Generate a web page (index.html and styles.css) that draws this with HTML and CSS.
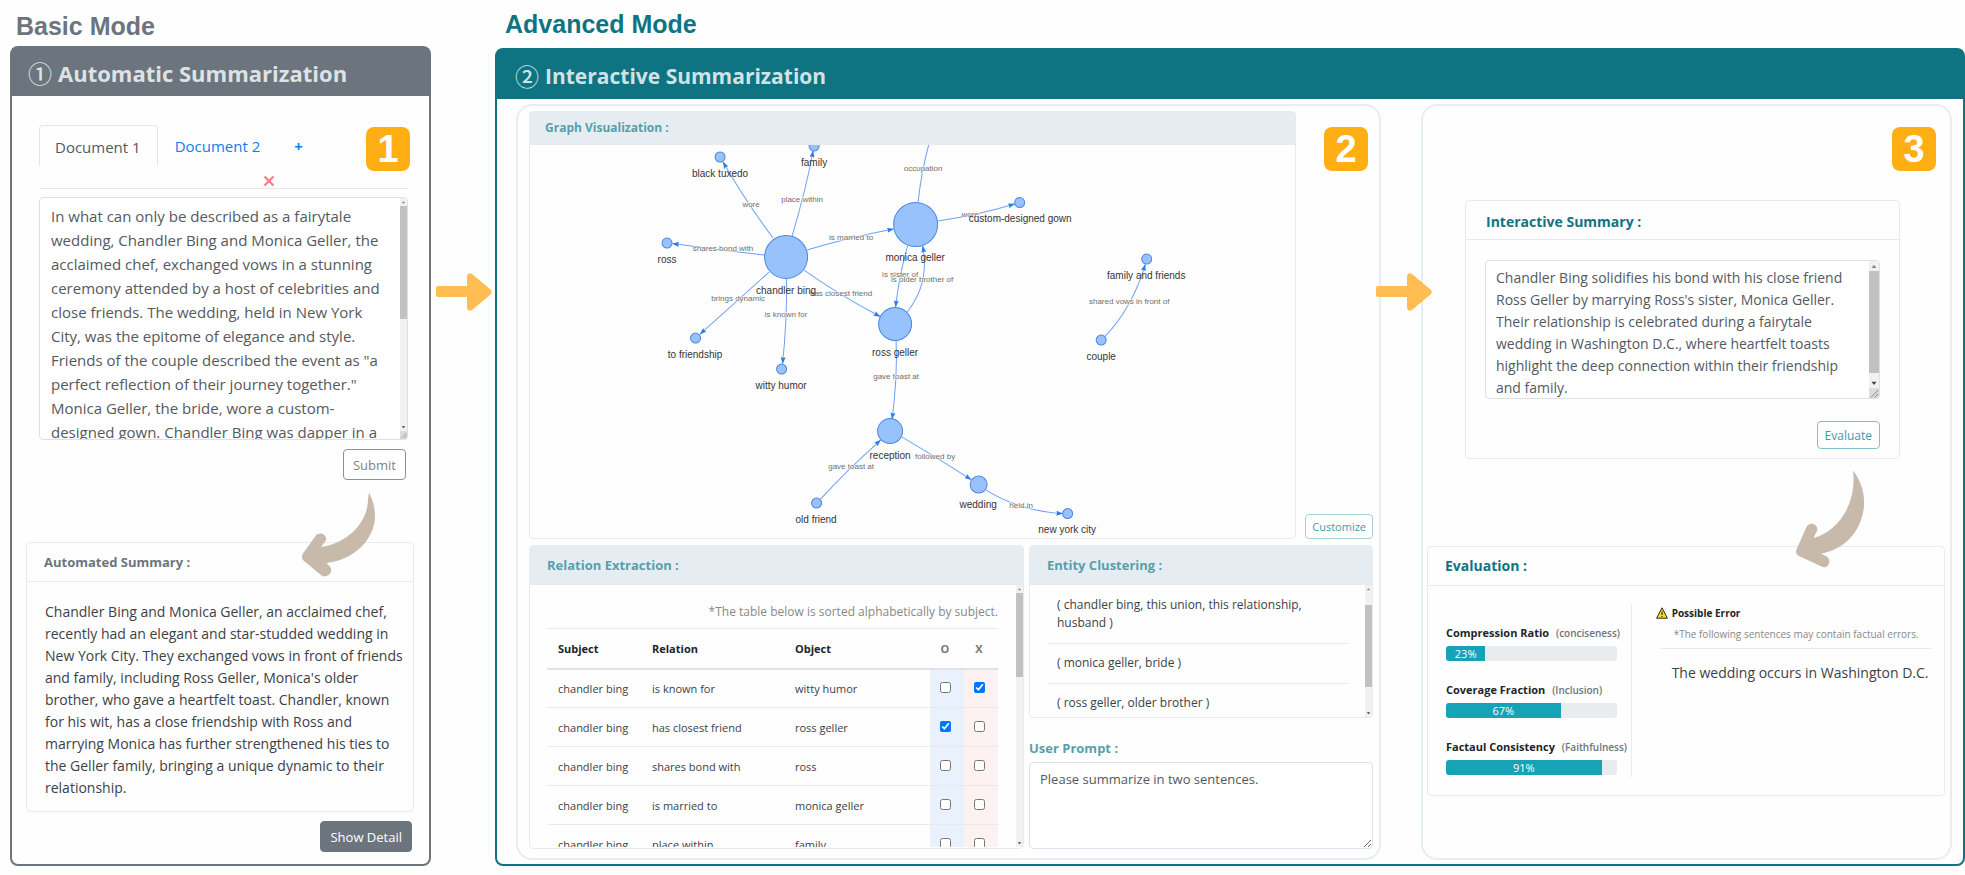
FILE: index.html
```html
<!DOCTYPE html>
<html lang="en">
<head>
<meta charset="utf-8">
<title>Summarization</title>
<link rel="stylesheet" href="styles.css">
</head>
<body>
<svg class="defs" width="0" height="0" aria-hidden="true">
  <symbol id="sb-up" viewBox="0 0 8 8"><path d="M2 5.500L4 3L6 5.500Z" fill="#8a8a8a"/></symbol>
  <symbol id="sb-down" viewBox="0 0 8 8"><path d="M2 3L4 5.500L6 3Z" fill="#444"/></symbol>
  <symbol id="sb-grip" viewBox="0 0 8 8"><path d="M1.500 7.500L7.500 1.500M4.500 7.500L7.500 4.500" stroke="#888" stroke-width=".8"/></symbol>
</svg>
<main class="page">
  <section class="mode mode-basic">
    <h1 class="mode-title">Basic Mode</h1>
    <div class="shell">
      <h2 class="shell-head"><span class="num">①</span> Automatic Summarization</h2>
      <div class="basic-body">
        <span class="badge">1</span>
        <div class="doc-area">
          <nav class="tabs">
            <a class="tab active" href="#doc1">Document 1</a>
            <a class="tab" href="#doc2">Document 2</a>
            <a class="tab add" href="#add">+</a>
            <button class="tab-close" type="button" aria-label="Remove document">
              <svg viewBox="0 0 12 12" width="12" height="12"><path d="M1.500 1.500l9 9M10.500 1.500l-9 9" stroke="#f77d84" stroke-width="2.200" fill="none"/></svg>
            </button>
          </nav>
          <div class="field">
            <textarea class="doc-text" aria-label="Document text">In what can only be described as a fairytale wedding, Chandler Bing and Monica Geller, the acclaimed chef, exchanged vows in a stunning ceremony attended by a host of celebrities and close friends. The wedding, held in New York City, was the epitome of elegance and style. Friends of the couple described the event as "a perfect reflection of their journey together." Monica Geller, the bride, wore a custom-designed gown. Chandler Bing was dapper in a</textarea>
            <div class="sb sb-over">
              <svg><use href="#sb-up"/></svg>
              <div class="sb-track" style="grid-template-rows:0fr 115fr 105fr"><i></i></div>
              <svg><use href="#sb-down"/></svg>
              <svg class="grip"><use href="#sb-grip"/></svg>
            </div>
          </div>
          <div class="actions"><button class="btn btn-grey" type="button">Submit</button></div>
        </div>
        <section class="card summary">
          <h3 class="card-head grey">Automated Summary :</h3>
          <p class="summary-text">Chandler Bing and Monica Geller, an acclaimed chef, recently had an elegant and star-studded wedding in New York City. They exchanged vows in front of friends and family, including Ross Geller, Monica's older brother, who gave a heartfelt toast. Chandler, known for his wit, has a close friendship with Ross and marrying Monica has further strengthened his ties to the Geller family, bringing a unique dynamic to their relationship.</p>
          <svg class="swoop swoop-basic" viewBox="302 492 74 85" width="74" height="85" aria-hidden="true"><path fill="#c8baaa" d="M369 492.500C374 502 376 513 374.500 522C371 543 352 560 326.500 563L329.500 566C334 571 328 579 321.500 575.500L303.500 560.500C301.500 558.500 301.500 556 303 553.500L315.500 536C319.500 530.500 328.500 535 325.500 541L321 547C347 543.500 368 523 368 499Z"/></svg>
        </section>
        <div class="actions"><button class="btn btn-solid" type="button">Show Detail</button></div>
      </div>
    </div>
  </section>

  <svg class="arrow" viewBox="0 0 56 38" width="56" height="38" aria-hidden="true"><path fill="#ffbd52" d="M2 13H31V3Q32 -1 36 1L54.500 16.500Q57 19 54.500 21.500L36 37Q32 39 31 35V24H2Q0 24 0 22V15Q0 13 2 13Z"/></svg>

  <section class="mode mode-advanced">
    <h1 class="mode-title">Advanced Mode</h1>
    <div class="shell">
      <h2 class="shell-head"><span class="num">②</span> Interactive Summarization</h2>
      <div class="adv-body">
        <div class="panel panel-explore">
          <span class="badge">2</span>
          <div class="graph-row">
            <section class="card graph">
              <h3 class="card-head tinted small">Graph Visualization :</h3>
              <svg class="graph-canvas" viewBox="530 146 765 393" role="img" aria-label="Relation graph">
                <defs><marker id="tip" viewBox="0 0 7 5" refX="6.500" refY="2.500" markerWidth="7" markerHeight="5" markerUnits="userSpaceOnUse" orient="auto"><path d="M0 0L7 2.500L0 5L1 2.500Z" fill="#2b7ce9"/></marker></defs>
                <g class="edges">
                  <path marker-end="url(#tip)" d="M773 239Q746 203 723 163"/>
                  <path marker-end="url(#tip)" d="M792 237Q806 190 813 152"/>
                  <path d="M918 203Q921 174 928.500 146"/>
                  <path marker-end="url(#tip)" d="M807 251Q846 239 893.500 230"/>
                  <path marker-end="url(#tip)" d="M764 256Q718 251 672.500 244.500"/>
                  <path marker-end="url(#tip)" d="M938 222Q978 216 1014.500 205"/>
                  <path marker-end="url(#tip)" d="M907.500 247Q899 276 895.500 308"/>
                  <path marker-end="url(#tip)" d="M907 313Q930 284 922.500 247"/>
                  <path marker-end="url(#tip)" d="M804 271Q836 294 880 317.500"/>
                  <path marker-end="url(#tip)" d="M769 273Q736 303 700 335"/>
                  <path marker-end="url(#tip)" d="M786.500 280Q787 322 782.500 364.500"/>
                  <path marker-end="url(#tip)" d="M896 342Q897.500 378 892 420"/>
                  <path marker-end="url(#tip)" d="M820.500 500Q846 472 880.500 441"/>
                  <path marker-end="url(#tip)" d="M902 438Q938 459 971 480.500"/>
                  <path marker-end="url(#tip)" d="M986 491Q1020 512 1062.500 514.500"/>
                  <path marker-end="url(#tip)" d="M1105 337Q1132 309 1145 265.500"/>
                </g>
                <g class="edge-labels">
                  <text x="751" y="208">wore</text>
                  <text x="802" y="203">place within</text>
                  <text x="923" y="172">occupation</text>
                  <text x="851" y="241">is married to</text>
                  <text x="723" y="252">shares bond with</text>
                  <text x="970" y="218">wore</text>
                  <text x="900" y="278">is sister of</text>
                  <text x="922" y="283">is older brother of</text>
                  <text x="841" y="297">has closest friend</text>
                  <text x="738" y="302">brings dynamic</text>
                  <text x="786" y="318">is known for</text>
                  <text x="896" y="380">gave toast at</text>
                  <text x="935" y="460">followed by</text>
                  <text x="851" y="470">gave toast at</text>
                  <text x="1021" y="509">held in</text>
                  <text x="1129" y="305">shared vows in front of</text>
                </g>
                <g class="nodes">
                  <circle cx="720" cy="158" r="5"/><circle cx="814" cy="147" r="5"/>
                  <circle cx="667" cy="244" r="5"/><circle cx="786" cy="258" r="21.500"/>
                  <circle cx="915.500" cy="225.500" r="22"/><circle cx="1019.500" cy="203.500" r="5"/>
                  <circle cx="1146.500" cy="260" r="5"/><circle cx="895" cy="325" r="16.500"/>
                  <circle cx="695.500" cy="339" r="5"/><circle cx="781.500" cy="370" r="5"/>
                  <circle cx="890" cy="432" r="12.500"/><circle cx="1101" cy="341" r="5"/>
                  <circle cx="816.500" cy="504" r="5"/><circle cx="978.500" cy="485.500" r="8.500"/>
                  <circle cx="1067.500" cy="514.500" r="5"/>
                </g>
                <g class="node-labels">
                  <text x="720" y="178">black tuxedo</text>
                  <text x="814" y="167">family</text>
                  <text x="667" y="264">ross</text>
                  <text x="786" y="295">chandler bing</text>
                  <text x="915" y="262">monica geller</text>
                  <text x="1020" y="223">custom-designed gown</text>
                  <text x="1146" y="280">family and friends</text>
                  <text x="895" y="357">ross geller</text>
                  <text x="695" y="359">to friendship</text>
                  <text x="781" y="390">witty humor</text>
                  <text x="890" y="460">reception</text>
                  <text x="1101" y="361">couple</text>
                  <text x="816" y="524">old friend</text>
                  <text x="978" y="509">wedding</text>
                  <text x="1067" y="534">new york city</text>
                </g>
              </svg>
            </section>
            <button class="btn btn-teal btn-small" type="button">Customize</button>
          </div>
          <div class="tools-row">
            <section class="card relation">
              <h3 class="card-head tinted">Relation Extraction :</h3>
              <div class="scroll-row relation-scroll">
                <div class="scroll relation-body">
                  <p class="note">*The table below is sorted alphabetically by subject.</p>
                  <table class="rel-table">
                    <thead><tr><th class="c-sub">Subject</th><th class="c-rel">Relation</th><th>Object</th><th class="c-mark">O</th><th class="c-mark">X</th></tr></thead>
                    <tbody>
                      <tr><td>chandler bing</td><td>is known for</td><td>witty humor</td><td class="yes"><input type="checkbox" aria-label="Keep: is known for"></td><td class="no"><input type="checkbox" checked aria-label="Drop: is known for"></td></tr>
                      <tr><td>chandler bing</td><td>has closest friend</td><td>ross geller</td><td class="yes"><input type="checkbox" checked aria-label="Keep: has closest friend"></td><td class="no"><input type="checkbox" aria-label="Drop: has closest friend"></td></tr>
                      <tr><td>chandler bing</td><td>shares bond with</td><td>ross</td><td class="yes"><input type="checkbox" aria-label="Keep: shares bond with"></td><td class="no"><input type="checkbox" aria-label="Drop: shares bond with"></td></tr>
                      <tr><td>chandler bing</td><td>is married to</td><td>monica geller</td><td class="yes"><input type="checkbox" aria-label="Keep: is married to"></td><td class="no"><input type="checkbox" aria-label="Drop: is married to"></td></tr>
                      <tr><td>chandler bing</td><td>place within</td><td>family</td><td class="yes"><input type="checkbox" aria-label="Keep: place within"></td><td class="no"><input type="checkbox" aria-label="Drop: place within"></td></tr>
                    </tbody>
                  </table>
                </div>
                <div class="sb">
                  <svg><use href="#sb-up"/></svg>
                  <div class="sb-track" style="grid-template-rows:0fr 85fr 163fr"><i></i></div>
                  <svg><use href="#sb-down"/></svg>
                </div>
              </div>
            </section>
            <div class="side">
              <section class="card entity">
                <h3 class="card-head tinted">Entity Clustering :</h3>
                <div class="scroll-row entity-scroll">
                  <div class="scroll entity-body">
                    <ul class="clusters">
                      <li>( chandler bing, this union, this relationship, husband )</li>
                      <li>( monica geller, bride )</li>
                      <li>( ross geller, older brother )</li>
                    </ul>
                  </div>
                  <div class="sb">
                    <svg><use href="#sb-up"/></svg>
                    <div class="sb-track" style="grid-template-rows:12fr 81fr 22fr"><i></i></div>
                    <svg><use href="#sb-down"/></svg>
                  </div>
                </div>
              </section>
              <label class="prompt-label" for="prompt">User Prompt :</label>
              <textarea class="prompt" id="prompt">Please summarize in two sentences.</textarea>
            </div>
          </div>
        </div>

        <div class="panel panel-result">
          <span class="badge">3</span>
          <svg class="arrow-over" viewBox="0 0 56 38" width="56" height="38" aria-hidden="true"><path fill="#ffbd52" d="M2 13H31V3Q32 -1 36 1L54.500 16.500Q57 19 54.500 21.500L36 37Q32 39 31 35V24H2Q0 24 0 22V15Q0 13 2 13Z"/></svg>
          <section class="card interactive">
            <h3 class="card-head teal">Interactive Summary :</h3>
            <div class="interactive-body">
              <div class="field">
                <textarea class="result-text" aria-label="Interactive summary">Chandler Bing solidifies his bond with his close friend Ross Geller by marrying Ross's sister, Monica Geller. Their relationship is celebrated during a fairytale wedding in Washington D.C., where heartfelt toasts highlight the deep connection within their friendship and family.</textarea>
                <div class="sb sb-over sb-wide">
                  <svg><use href="#sb-up"/></svg>
                  <div class="sb-track" style="grid-template-rows:0fr 102fr 5fr"><i></i></div>
                  <svg><use href="#sb-down"/></svg>
                  <svg class="grip"><use href="#sb-grip"/></svg>
                </div>
              </div>
              <div class="actions"><button class="btn btn-teal" type="button">Evaluate</button></div>
            </div>
          </section>
          <section class="card evaluation">
            <h3 class="card-head teal">Evaluation :</h3>
            <svg class="swoop swoop-result" viewBox="1797 471 69 97" width="69" height="97" aria-hidden="true"><path fill="#c8baaa" d="M1854 470.500C1862 481 1866 493 1865 507C1862 532 1845 550 1822 553.500L1827 556C1834 560 1829 570 1822.500 566.500L1800 556C1797 554.500 1796.500 552 1797.500 549.500L1807.500 527C1811 520.500 1820 524.500 1818 531L1814.500 538C1840 531 1858 503 1854 470.500Z"/></svg>
            <div class="eval-body">
              <div class="metrics">
                <div class="metric"><div class="metric-name">Compression Ratio <span>(conciseness)</span></div><div class="bar"><div class="fill" style="width:23%">23%</div></div></div>
                <div class="metric"><div class="metric-name">Coverage Fraction <span>(Inclusion)</span></div><div class="bar"><div class="fill" style="width:67%">67%</div></div></div>
                <div class="metric"><div class="metric-name">Factaul Consistency <span>(Faithfulness)</span></div><div class="bar"><div class="fill" style="width:91%">91%</div></div></div>
              </div>
              <div class="errors">
                <h4 class="err-title"><svg viewBox="0 0 12 12" width="12" height="12" aria-hidden="true"><path d="M6 .8L11.400 11.200H.6Z" fill="#f5e21c" stroke="#2b2b1c" stroke-width="1" stroke-linejoin="round"/><path d="M6 4.500V8M6 9V10" stroke="#222" stroke-width="1.100"/></svg>Possible Error</h4>
                <p class="err-note">*The following sentences may contain factual errors.</p>
                <p class="err-text">The wedding occurs in Washington D.C.</p>
              </div>
            </div>
          </section>
        </div>
      </div>
    </div>
  </section>
</main>
</body>
</html>
```

FILE: styles.css
```css
* { box-sizing: border-box; }
body {
  margin: 0;
  background: #fefefe;
  color: #3c4146;
  font-family: "Open Sans", "Noto Sans", sans-serif;
  font-size: 14px;
}
h1, h2, h3, h4, p, ul { margin: 0; padding: 0; }
button, textarea { font-family: inherit; }
.defs { position: absolute; }

.page {
  display: grid;
  grid-template-columns: 421fr 64px 1470fr;
  min-height: 100vh;
  padding: 0 0 9px 10px;
}
.mode { display: flex; flex-direction: column; min-width: 0; }
.mode-title {
  font: bold 25px/28px "Liberation Sans", Arial, sans-serif;
  padding: 12px 0 6px 6px;
  color: #6c757d;
}
.mode-advanced .mode-title { padding: 10px 0 10px 10px; color: #0f7482; }
.shell {
  flex: 1;
  display: flex;
  flex-direction: column;
  border: 2px solid #6c757d;
  border-radius: 8px;
}
.shell-head {
  display: flex;
  align-items: center;
  gap: 6px;
  background: #6c757d;
  color: #dfe2e4;
  font-size: 22px;
  line-height: 32px;
  height: 48px;
  padding: 2px 0 0 16px;
  white-space: nowrap;
}
.num { font-weight: 500; font-size: 24px; font-family: "Noto Sans CJK JP", sans-serif; }
.mode-advanced .shell { border-color: #0f7482; }
.mode-advanced .shell-head { background: #0f7482; color: #cfe3e6; height: 49px; padding-left: 18px; font-size: 21px; }

.arrow { margin: 273px 0 0 5px; }

.badge {
  position: absolute;
  width: 44px;
  height: 44px;
  border-radius: 8px;
  background: #ffae14;
  color: #fff;
  font: bold 38px/44px "Liberation Sans", Arial, sans-serif;
  text-align: center;
}

/* Basic mode */
.basic-body { position: relative; padding: 29px 15px 11px 14px; }
.basic-body .badge { top: 31px; right: 19px; }
.doc-area { padding: 0 6px 0 13px; }
.tabs {
  display: flex;
  flex-wrap: wrap;
  height: 64px;
  border-bottom: 1px solid #e4e7ea;
  margin-bottom: 8px;
}
.tab {
  height: 41px;
  padding: 0 17px;
  line-height: 42px;
  font-size: 15px;
  color: #0d7ef0;
  text-decoration: none;
}
.tab.active {
  color: #54595e;
  border: 1px solid #e4e7ea;
  border-bottom: 0;
  border-radius: 4px 4px 0 0;
  padding: 0 16px 0 15px;
}
.tab.add { font-weight: bold; }
.tab-close {
  flex: 0 0 100%;
  height: 22px;
  padding: 9px 0 0 224px;
  border: 0;
  background: none;
  text-align: left;
  line-height: 1;
}
textarea {
  display: block;
  width: 100%;
  background: #fff;
  border: 1px solid #dde1e5;
  border-radius: 4px;
  color: #54595e;
}
.field { position: relative; }
.field textarea { resize: none; overflow: hidden; }
.doc-text {
  height: 243px;
  padding: 6px 20px 0 11px;
  font-size: 15px;
  line-height: 24px;
}
.actions { display: flex; justify-content: flex-end; }
.btn {
  background: #fff;
  border: 1px solid #8b9197;
  border-radius: 4px;
  height: 31px;
  padding: 0 9px;
  font-size: 13px;
}
.btn-grey { color: #7c838a; margin: 9px 2px 0 0; }
.btn-solid { background: #6c757d; border-color: #6c757d; color: #fff; margin: 9px 2px 0 0; }
.btn-teal { height: 28px; font-size: 12px; padding: 0 7px; color: #3d9bab; border-color: #7cc3cf; }
.btn-small { height: 25px; font-size: 11px; border-color: #9fd3da; padding: 0 6px; }

.card {
  position: relative;
  border: 1px solid #e8ebee;
  border-radius: 4px;
  background: #fefefe;
}
.card-head {
  height: 39px;
  line-height: 38px;
  padding: 0 17px;
  border-bottom: 1px solid #e8ebee;
  font-size: 13px;
}
.card-head.grey { color: #6c757d; }
.card-head.teal { color: #0f7482; font-size: 14px; }
.card-head.tinted { background: #e5edf3; color: #5a9ea9; }
.card-head.small { height: 33px; line-height: 32px; font-size: 12px; padding: 0 15px; }

.summary { margin-top: 62px; }
.summary-text {
  padding: 19px 7px 12px 18px;
  font-size: 14px;
  line-height: 22px;
  min-height: 229px;
}
.swoop { position: absolute; }
.swoop-basic { top: -51px; right: 37px; }
.swoop-result { top: -76px; right: 79px; }

/* Advanced mode */
.adv-body {
  flex: 1;
  display: grid;
  grid-template-columns: 865fr 531fr;
  gap: 40px;
  padding: 5px 11px 4px 19px;
}
.panel {
  position: relative;
  min-width: 0;
  border: 2px solid #e5eef3;
  border-radius: 16px;
}
.panel-explore {
  display: flex;
  flex-direction: column;
  gap: 6px;
  padding: 5px 6px 9px 11px;
}
.panel .badge { top: 21px; right: 11px; }
.panel-result .badge { right: 14px; }
.graph-row { display: flex; align-items: flex-end; gap: 9px; }
.graph { flex: 1; }
.graph-canvas { display: block; width: 100%; height: auto; font-family: "Liberation Sans", Arial, sans-serif; }
.edges path { fill: none; stroke: #6da0f2; stroke-width: 1; }
.nodes circle { fill: #97c2fc; stroke: #4a86e0; stroke-width: 1; }
.edge-labels text {
  font-size: 8px;
  text-anchor: middle;
  fill: #6e6e6e;
  stroke: #fff;
  stroke-width: 1px;
  paint-order: stroke;
}
.node-labels text { font-size: 10px; text-anchor: middle; fill: #343434; }

.tools-row { display: grid; grid-template-columns: 495fr 344fr; gap: 5px; }
.relation, .entity { overflow: hidden; }
.scroll-row { display: flex; }
.scroll { flex: 1; min-width: 0; overflow-y: auto; scrollbar-width: none; }
.relation-scroll { height: 262px; }
.relation-body { padding: 0 18px 0 17px; }
.note {
  text-align: right;
  color: #888;
  font-size: 12px;
  line-height: 18px;
  padding: 18px 0 7px;
}
.rel-table { width: 100%; border-collapse: collapse; table-layout: fixed; font-size: 11px; }
.rel-table th { height: 40px; padding: 0 0 0 11px; text-align: left; color: #212529; border-top: 1px solid #e8ebee; border-bottom: 2px solid #dfe3e6; }
.rel-table td { height: 39px; padding: 0 0 0 11px; border-top: 1px solid #e8ebee; }
.rel-table .c-sub { width: 94px; }
.rel-table .c-rel { width: 143px; }
.rel-table .c-mark { width: 34px; padding: 0 4px 0 0; text-align: center; color: #777; }
.rel-table td.yes, .rel-table td.no { padding: 0 3px 4px 0; text-align: center; background: #e8f1fc; }
.rel-table td.no { background: #fef1f1; }
.rel-table input { width: 11px; height: 11px; margin: 0; vertical-align: middle; }

.side { display: flex; flex-direction: column; }
.entity-scroll { height: 132px; }
.entity-body { padding: 1px 17px 0; }
.clusters { list-style: none; font-size: 12px; line-height: 18px; }
.clusters li { padding: 10px 40px 11px 10px; border-bottom: 1px solid #e8ebee; }
.clusters li:last-child { border-bottom: 0; }
.prompt-label { font-weight: bold; color: #5a9ea9; font-size: 13px; line-height: 20px; padding: 20px 0 4px; }
.prompt { height: 87px; padding: 5px 10px; font-size: 13px; line-height: 22px; }

.panel-result { padding: 94px 5px 0 4px; }
.arrow-over { position: absolute; top: 167px; left: -47px; }
.interactive { margin: 0 45px 0 38px; }
.interactive .card-head { line-height: 42px; padding-left: 20px; }
.interactive-body { padding: 20px 19px 9px; }
.result-text { height: 139px; padding: 6px 20px 0 10px; font-size: 14px; line-height: 22px; }
.interactive .actions { padding-top: 22px; }
.evaluation { margin-top: 87px; }
.eval-body { display: grid; grid-template-columns: 191fr 309fr; padding: 18px 12px 18px 18px; }
.metrics { border-right: 1px solid #e8ebee; padding-top: 21px; white-space: nowrap; }
.metric { margin-bottom: 21px; }
.metric:last-child { margin-bottom: 2px; }
.metric-name { font-weight: bold; font-size: 11px; line-height: 16px; color: #212529; margin-bottom: 5px; }
.metric-name span { color: #6c757d; font-size: 10px; font-weight: 600; margin-left: 4px; }
.bar { width: 171px; height: 15px; border-radius: 3px; background: #e9ecef; overflow: hidden; }
.fill { height: 100%; background: #17a2b8; color: #fff; font-size: 11px; line-height: 15px; text-align: center; }
.errors { padding: 1px 0 0 24px; white-space: nowrap; }
.err-title { display: flex; align-items: center; gap: 4px; font-size: 10px; line-height: 16px; color: #212529; }
.err-note { margin-left: 4px; padding: 5px 0 6px 14px; border-bottom: 1px solid #e8ebee; color: #888; font-size: 10px; line-height: 16px; }
.err-text { padding: 14px 0 0 16px; font-size: 14px; line-height: 20px; }

/* Scroll bars */
.sb { display: flex; flex-direction: column; width: 7px; background: #f1f1f1; }
.sb svg { flex: none; width: 100%; height: 8px; }
.sb-track { flex: 1; display: grid; }
.sb-track i { grid-row: 2; background: #c1c1c1; }
.sb .grip { background: #dcdcdc; }
.sb-over { position: absolute; top: 1px; right: 1px; bottom: 1px; pointer-events: none; }
.sb-wide { width: 10px; }
.sb-wide svg { height: 10px; }
```
